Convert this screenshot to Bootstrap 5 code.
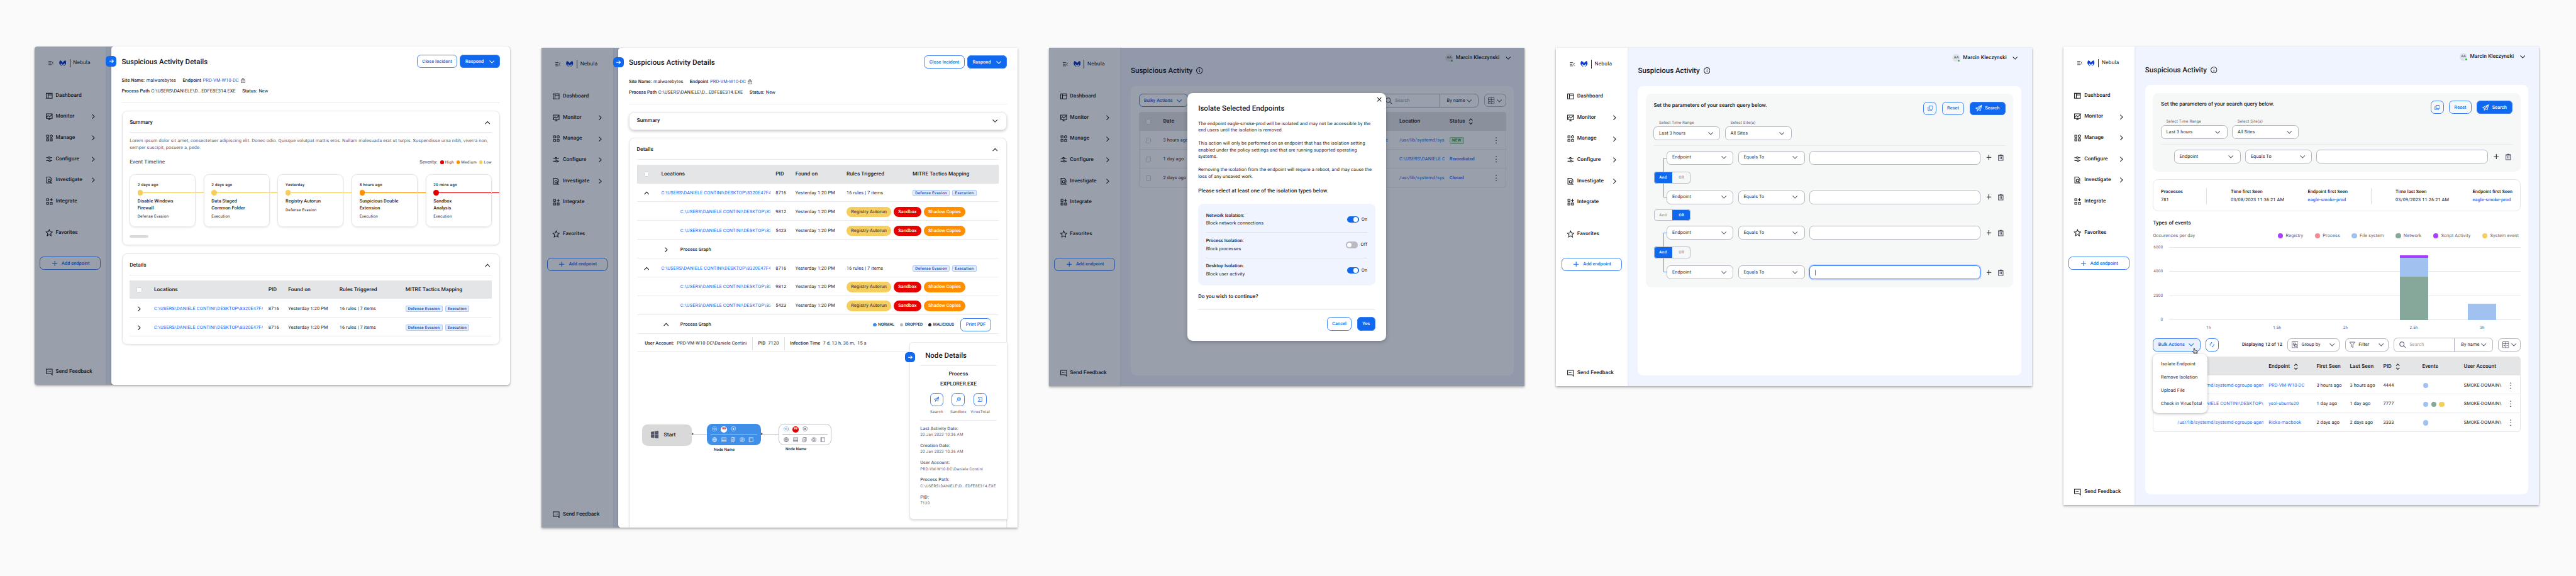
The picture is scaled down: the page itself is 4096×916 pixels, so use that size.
<!doctype html>
<html lang="en">
<head>
<meta charset="utf-8">
<meta name="viewport" content="width=device-width, initial-scale=1">
<title>Nebula – Suspicious Activity</title>
<link rel="stylesheet" href="https://cdn.jsdelivr.net/npm/bootstrap@5.3.0/dist/css/bootstrap.min.css">
<script src="https://cdn.jsdelivr.net/npm/bootstrap@5.3.0/dist/js/bootstrap.bundle.min.js"></script>
<style>
/* 1rem = 10 units of the 1440-unit wide screens */
html{font-size:5.253px}
body{font:400 1.4rem/2rem Roboto,"Liberation Sans",sans-serif;letter-spacing:.025rem;color:#1b1b1f;background:#fafafa;width:4096px;height:916px;overflow:hidden;white-space:nowrap;text-rendering:geometricPrecision}
svg{flex:none;display:block;fill:none;stroke:currentColor;stroke-width:2}
.i16{width:1.6rem;height:1.6rem}.i20{width:2rem;height:2rem}.i24{width:2.4rem;height:2.4rem}
.board{padding-left:54.9px;gap:50px}
.screen{width:144rem;flex:none;background:#f0f4ff;position:relative;overflow:hidden;box-shadow:0 1px 3px rgba(0,0,0,.28),0 3px 4px rgba(0,0,0,.12);margin-top:75.8px}
.h-std{height:102.4rem}
.t22{font-size:2.2rem;line-height:2.8rem;font-weight:500;letter-spacing:0}
.t16{font-size:1.6rem;line-height:2.4rem;font-weight:500;letter-spacing:.015rem}
.t14{font-size:1.4rem;line-height:2rem;font-weight:500;letter-spacing:.01rem}
.t12{font-size:1.2rem;line-height:1.6rem;letter-spacing:.04rem}
.t12m{font-size:1.2rem;line-height:1.6rem;letter-spacing:.05rem;font-weight:500}
.soft{color:#5d5f6e}
.link{color:#1a6bef}
.ol{outline:1px solid #e6e6ea;outline-offset:-1px}
.rule{height:1px;margin-bottom:-1px;background:#e9e9ee;flex:none}
.r16{border-radius:1.6rem}
/* sidebar */
.side{width:21.6rem;background:#fff;box-shadow:0 0 3px rgba(30,50,110,.12);z-index:1;flex:none}
.brandrow{height:10rem;padding-left:4.2rem;margin-bottom:1.6rem}
.brandrow .bar{width:1px;height:2.5rem;background:#333;margin:0 .9rem 0 1rem}
.brandrow .word{font-size:1.6rem;letter-spacing:.04rem}
.item{height:6.4rem;padding:0 3.1rem 0 3.2rem;gap:.8rem}
.btnx{height:4rem;border-radius:1.2rem;outline:1px solid #3f83f2;outline-offset:-1px;color:#1068ee;font-weight:500;letter-spacing:.01rem;padding:0 1.6rem;background:transparent;display:flex;align-items:center;justify-content:center}
.fillx{background:#1068ee;color:#fff}
.addx{margin:4rem 1.6rem 0;gap:1.3rem;padding-left:2rem}
/* drawer */
.veil::after{content:"";position:absolute;inset:0;background:rgba(2,17,45,.4);z-index:2}
.drawer{background:#fff;border-radius:.8rem 0 0 .8rem;z-index:3;padding:2.4rem 3.2rem 0;margin-left:1.6rem;box-shadow:0 0 4px rgba(0,0,0,.15);outline:1px solid rgba(0,0,0,.06)}
.knob{position:absolute;width:3.2rem;height:3.2rem;border-radius:1rem;background:#1068ee;color:#fff;left:-1.6rem;top:2.8rem;display:flex;align-items:center;justify-content:center}
.box{background:#fff;border-radius:1.6rem;outline:1px solid #e6e6ea;outline-offset:-1px;box-shadow:0 1px 3px rgba(0,0,0,.1);padding:0 2.4rem}
.boxhead{height:6.4rem;padding:.8rem .4rem 0 0}
.step{width:20rem;height:16rem;padding:2.4rem}
.trk{margin:.8rem -4.8rem .9rem 0;height:1.6rem}
.trk i{width:1.6rem;height:1.6rem;border-radius:50%;background:currentColor}
.trk b{height:.2rem;min-height:1px;background:currentColor;flex:1}
.dot{border-radius:50%;display:inline-block;background:currentColor;width:1rem;height:1rem}
/* tables */
.trow{display:grid;align-items:center;height:5.7rem;padding-top:.2rem;box-shadow:inset 0 -1px #e9e9ee}
.thd{background:#e4e5e7;font-size:1.6rem;font-weight:500;letter-spacing:.015rem;box-shadow:none}
.g-det{grid-template-columns:5.8rem 1.6rem 33rem 1.6rem 6rem 15.5rem 20rem 1fr}
.g-det>*{grid-row:1}
.g-det>:nth-child(1){grid-column:1;justify-self:center}.g-det>:nth-child(2){grid-column:3}.g-det>:nth-child(3){grid-column:5}.g-det>:nth-child(4){grid-column:6}.g-det>:nth-child(5){grid-column:7}.g-det>:nth-child(6){grid-column:8}
.clip{overflow:hidden}
.kid{padding-left:5.8rem}
.cbx{width:1.6rem;height:1.6rem;border-radius:.3rem;background:#fff;outline:1px solid #d0d1d6;outline-offset:-1px;display:block}
.tagx{height:2rem;line-height:2rem;border-radius:.4rem;padding:0 .8rem;background:#dfebff;outline:1px solid #abc9fb;outline-offset:-1px;color:#174a9c;font-weight:500;font-size:1.2rem;letter-spacing:.05rem}
.pillx{height:3.2rem;line-height:3.2rem;border-radius:1.6rem;padding:0 1.35rem;font-weight:500;background:currentColor;letter-spacing:.02rem}
.pillx span{color:#fff}.pillx.lo span{color:#4d4b4b}
.lo{color:#f4ce5e}.me{color:#ff8f00}.hi{color:#e60000}
.vr1{width:1px;background:#e0e0e6}
/* process graph */
.nodecard{position:absolute;left:85.1rem;right:0;top:62rem;height:53.4rem;background:#fff;border-radius:.8rem 0 0 .8rem;outline:1px solid #e9e9ee;box-shadow:0 2px 4px rgba(0,0,0,.2);padding:0 3.1rem}
.act{width:6.6rem}
.act .btnx{width:4rem;padding:0}
.startx{width:15rem;height:6.4rem;background:#d9d9d9;gap:1.6rem;margin-left:4rem;padding-left:2.6rem}
.wire{height:1px;background:#bdbdc4;margin-top:3.1rem;position:relative}
.wire::before{content:"";position:absolute;left:0;top:-.45rem;border:.5rem solid transparent;border-left:.7rem solid #4b4d5e;border-right:0}
.node{height:6.4rem;padding:.8rem 1.6rem}
.node .hl{height:1px;background:currentColor;opacity:.6;margin:.7rem -.4rem .6rem}
.score{width:1.8rem;height:1.8rem;border-radius:50%;background:#e60000;color:#fff;font-size:1rem;font-weight:700;letter-spacing:0;line-height:1.8rem;text-align:center}
/* main page */
.page{padding:0 3.2rem 3.2rem}
.user{padding:1.9rem 1rem 0 0;height:4.3rem}
.ava{width:2.4rem;height:2.4rem;border-radius:50%;background:#e1e3e8;font-size:1.1rem;line-height:2.4rem;text-align:center;color:#5d5f6e;position:relative;letter-spacing:0;margin-right:.8rem;font-weight:500}
.ava::after{content:"";position:absolute;width:.6rem;height:.6rem;border-radius:50%;background:#2fc132;right:.1rem;bottom:.1rem}
.content{background:#fff;border-radius:1.6rem;padding:2.4rem}
.query{background:#f6f8f8;border-radius:1.6rem;padding:2.4rem}
.fld{height:4.2rem;width:20.2rem;border-radius:1.2rem;background:#fff;outline:1px solid #b3b4be;outline-offset:-1px;padding:0 2.1rem 0 1.7rem;display:flex;align-items:center;justify-content:space-between;color:#2a2a30}
.fld svg,.tool svg{color:#55576a}
.wide{width:51.8rem}
.crit{margin-left:3.9rem;gap:1.4rem}
.focusx{outline:1px solid #2f79f2;box-shadow:0 0 0 1.5px #bcd2fb}
.focusx i{width:1px;height:1.8rem;background:#777}
.pair{position:relative}
.pair::before{content:"";position:absolute;left:2.9rem;top:2.1rem;bottom:2.1rem;width:1rem;border:1px solid #5b95f5;border-right:0}
.ao{width:11.2rem;height:3.6rem;border-radius:.8rem;outline:1px solid #b9bac3;outline-offset:-1px;position:relative;overflow:hidden;font-size:1.2rem;font-weight:500;letter-spacing:.05rem;color:#9b9ca8;text-align:center;line-height:3.6rem}
.ao>*{width:50%}.ao .on{background:#1068ee;color:#fff}
.tool{height:4rem;border-radius:1.2rem;outline:1px solid #b3b4be;outline-offset:-1px;display:flex;align-items:center}
.g-p3{grid-template-columns:5.8rem 1.6rem 67rem 4.5rem 13.8rem 1.4rem 13rem 1fr}
/* modal */
.dialogx{position:absolute;z-index:4;left:42rem;top:13.7rem;width:60rem;height:75rem;background:#fff;border-radius:1.6rem;padding:3.2rem;box-shadow:0 2px 6px rgba(0,0,0,.25)}
.iso{background:#f0f4ff;border-radius:1.6rem;padding:.9rem 2.4rem .7rem}
.isoi{height:7.7rem}
.sw{width:3.6rem;height:2rem;border-radius:1rem;background:#1068ee;padding:.3rem;display:flex;justify-content:flex-end}
.sw::before{content:"";width:1.4rem;height:1.4rem;border-radius:50%;background:#fff}
.sw.off{background:#b9bac2;justify-content:flex-start}
/* results */
.plot{height:22rem;position:relative}
.plot .ln{height:0;gap:1.9rem}
.plot .ln span{width:3rem;text-align:right}
.plot .ln b{flex:1;height:1px;background:#e6e6ea}
.bars{position:absolute;left:6.5rem;width:103.5rem;top:0;bottom:0;display:grid;grid-template-columns:repeat(5,1fr);justify-items:center;align-items:end}
.bars>div{width:8.6rem;height:100%;display:flex;flex-direction:column;justify-content:flex-end}
.xax{display:grid;grid-template-columns:repeat(5,20.7rem);margin:1.6rem 0 0 6.5rem;text-align:center}
.ev{width:1.6rem;height:1.6rem}
.g-p5{grid-template-columns:7.4rem 26rem 1.6rem 14.5rem 10.1rem 10.1rem 11.8rem 12.6rem 12.8rem 1fr}
.menux{position:absolute;z-index:3;left:0;top:4.8rem;width:16.5rem;padding:.9rem 2.4rem;background:#fff;border-radius:1.6rem;box-shadow:0 1px 4px rgba(0,0,0,.3)}
.menux div{height:4rem;line-height:4rem}
.hand{position:absolute;z-index:4;left:11.7rem;top:2.8rem;width:2rem;height:2rem}
</style>
</head>
<body>
<svg width="0" height="0" class="position-absolute">
<symbol id="dn" viewBox="0 0 16 16"><path d="M1 4.5l7 7 7-7"/></symbol>
<symbol id="up" viewBox="0 0 16 16"><path d="M1 11.5l7-7 7 7"/></symbol>
<symbol id="rt" viewBox="0 0 16 16"><path d="M4.5 1l7 7-7 7"/></symbol>
<symbol id="arr" viewBox="0 0 16 16"><path d="M2 8h12M9 3l5 5-5 5"/></symbol>
<symbol id="plus" viewBox="0 0 16 16"><path d="M8 0v16M0 8h16"/></symbol>
<symbol id="ham" viewBox="0 0 16 16"><path stroke-width="1.5" d="M0 3h10M0 8h8M0 13h10M16 3l-5 5 5 5"/></symbol>
<symbol id="logo" viewBox="0 0 22 18"><path stroke="none" fill="#0f3fd0" d="M3 0c-4 5-4 11 2.500 15.500-1-3-.8-5 .2-6.500L11 14l5.300-5c1 1.500 1.200 3.500.2 6.500C23 11 23 5 19 0c-3 .6-6.300 3.400-8 7C9.300 3.400 6 .6 3 0zM5.500 15.500c1.500 1.500 3 2.200 4.500 2.300-2-1.300-3-3-3-5zM16.500 15.500c-1.500 1.500-3 2.200-4.500 2.300 2-1.300 3-3 3-5z"/></symbol>
<symbol id="dash" viewBox="0 0 24 24"><path d="M3 4.500h18v15H3zM8.500 4.500v15M8.500 9.500H21"/></symbol>
<symbol id="mon" viewBox="0 0 24 24"><path d="M3 4h18v13.500H3zM12 17v4M8 21h8M3 15l6-6 4 4 8-8"/></symbol>
<symbol id="man" viewBox="0 0 24 24"><path d="M4 4h6v6H4zM4 15h6v6H4zM15 15h6v6h-6zM18 3l3.300 1.900v4L18 10.800l-3.300-1.900v-4z"/></symbol>
<symbol id="cfg" viewBox="0 0 24 24"><path d="M3 7h6M14 7h7M3 16h8M16 16h5"/><circle cx="11.500" cy="7" r="2.500"/><circle cx="13.500" cy="16" r="2.500"/></symbol>
<symbol id="inv" viewBox="0 0 24 24"><path d="M19 16V8l-5-5H4v18h14M14.500 16.500L20 22"/><circle cx="12" cy="13.500" r="3.800"/></symbol>
<symbol id="int" viewBox="0 0 24 24"><path d="M4 4h6v6H4zM4 15h6v6H4zM15 15h6v6h-6zM18 2.500v9M13.500 7h9"/></symbol>
<symbol id="star" viewBox="0 0 24 24"><path d="M12 2.500l2.800 6.300 6.700.7-5 4.600 1.400 6.700L12 17.300l-5.900 3.500 1.400-6.700-5-4.600 6.700-.7z"/></symbol>
<symbol id="fb" viewBox="0 0 24 24"><path d="M3 4h18v17l-4-4H3zM7 10.500h2M11 10.500h2M15 10.500h2"/></symbol>
<symbol id="lock" viewBox="0 0 16 18"><path stroke-width="1.500" d="M1 7h14v10H1zM4.500 7V4.500a3.500 3.500 0 017 0V7M8 10v4"/></symbol>
<symbol id="info" viewBox="0 0 20 20"><circle cx="10" cy="10" r="9"/><path d="M10 9v6M10 5v2"/></symbol>
<symbol id="plane" viewBox="0 0 20 20"><path stroke-width="1.700" d="M19 1L1 9.500l5 2.500L19 1l-4 16-5.500-3.300L19 1M6 12v6l3.500-4.300"/></symbol>
<symbol id="copy" viewBox="0 0 16 16"><path stroke-width="1.600" d="M5 1h10v10H5zM3 4.500H1.500V15H12v-2"/></symbol>
<symbol id="trash" viewBox="0 0 24 24"><path d="M5 7h14v14H5zM4 6h16M9 4.500h6M10 10v7M14 10v7"/></symbol>
<symbol id="find" viewBox="0 0 20 20"><circle cx="8" cy="8" r="6.500"/><path d="M13 13l6 6"/></symbol>
<symbol id="cols" viewBox="0 0 20 20"><path stroke-width="1.600" d="M1 1h18v18H1zM1 6.500h18M10 1v18M3.500 12.500h4M5.500 10.500v4M12.500 12.500h4"/></symbol>
<symbol id="grp" viewBox="0 0 20 20"><path stroke-width="1.600" d="M1 1h18v18H1zM4.500 4.500h7v7h-7zM8.500 8.500h7v7h-7z"/></symbol>
<symbol id="fun" viewBox="0 0 20 20"><path stroke-width="1.700" d="M2 2h16l-6 8v8l-4-2v-6z"/></symbol>
<symbol id="sort" viewBox="0 0 14 20"><path d="M2 7l5-5 5 5M2 13l5 5 5-5"/></symbol>
<symbol id="keb" viewBox="0 0 4 20"><g stroke="none" fill="#44464f"><circle cx="2" cy="2" r="1.600"/><circle cx="2" cy="10" r="1.600"/><circle cx="2" cy="18" r="1.600"/></g></symbol>
<symbol id="sync" viewBox="0 0 16 16"><path stroke-width="1.600" d="M2.500 10.500a6 6 0 013-7.500L7.500 2M5.500 0l2.500 2-2 3M13.500 5.500a6 6 0 01-3 7.500l-2 1M10.500 16L8 14l2-3"/></symbol>
<symbol id="xx" viewBox="0 0 16 16"><path d="M2 2l12 12M14 2L2 14"/></symbol>
<symbol id="bugf" viewBox="0 0 16 16"><circle cx="9.500" cy="6.500" r="5" stroke-width="1.500"/><path stroke-width="1.500" d="M6 10l-4.500 5M9.500 4v5M7.500 6.500h4"/></symbol>
<symbol id="sig" viewBox="0 0 16 16"><path stroke-width="1.600" d="M14 2H2l6 6-6 6h12z"/></symbol>
<symbol id="win" viewBox="0 0 24 24"><path stroke="none" fill="#55576a" d="M0 3.500l10-1.400V11.500H0zM11.200 2l12.800-2v11.500H11.200zM0 12.600h10v9.500L0 20.600zM11.200 12.600H24V24l-12.800-1.800z"/></symbol>
<symbol id="ring" viewBox="0 0 16 16"><circle cx="8" cy="8" r="7" stroke-width="1.400" stroke-dasharray="8 2 2 2 3 2"/><circle cx="8" cy="8" r="2.500" stroke-width="1.400"/></symbol>
<symbol id="shield" viewBox="0 0 16 16"><path stroke-width="1.300" d="M8 .8l6 2v5c0 4-3 6.500-6 7.500-3-1-6-3.500-6-7.500v-5z"/><ellipse cx="8" cy="8" rx="2.200" ry="3" fill="currentColor" stroke="none"/></symbol>
<symbol id="globe" viewBox="0 0 16 16"><circle cx="8" cy="8" r="6.800" stroke-width="1.300"/><ellipse cx="8" cy="8" rx="3" ry="6.800" stroke-width="1.300"/><path stroke-width="1.300" d="M1 8h14M8 1v14"/></symbol>
<symbol id="srv" viewBox="0 0 16 16"><path stroke-width="1.300" d="M1.500 1.500h13v13h-13zM1.500 6h13M1.500 10.500h13"/></symbol>
<symbol id="docs" viewBox="0 0 16 16"><path stroke-width="1.300" d="M3 3h8v12H3zM5 3V1h8.500v11H11M5 7h4M5 9.500h4M5 12h4"/></symbol>
<symbol id="targ" viewBox="0 0 16 16"><circle cx="8" cy="8" r="6.800" stroke-width="1.300"/><circle cx="8" cy="8" r="3.500" stroke-width="1.300"/><path stroke-width="1.300" d="M8 5v3l2 2"/></symbol>
<symbol id="book" viewBox="0 0 16 16"><path stroke-width="1.300" d="M2 1.500h12v13H2zM4.500 1.500v13M8 4h1M11 4h1"/></symbol>
</svg>

<template id="side">
  <div class="brandrow d-flex align-items-center"><svg class="i16"><use href="#ham"/></svg><svg style="width:2.2rem;height:1.8rem;margin-left:1.6rem"><use href="#logo"/></svg><span class="bar"></span><span class="word">Nebula</span></div>
  <div class="t16">
    <div class="item d-flex align-items-center"><svg class="i24"><use href="#dash"/></svg>Dashboard</div>
    <div class="item d-flex align-items-center"><svg class="i24"><use href="#mon"/></svg>Monitor<svg class="i16 ms-auto"><use href="#rt"/></svg></div>
    <div class="item d-flex align-items-center"><svg class="i24"><use href="#man"/></svg>Manage<svg class="i16 ms-auto"><use href="#rt"/></svg></div>
    <div class="item d-flex align-items-center"><svg class="i24"><use href="#cfg"/></svg>Configure<svg class="i16 ms-auto"><use href="#rt"/></svg></div>
    <div class="item d-flex align-items-center"><svg class="i24"><use href="#inv"/></svg>Investigate<svg class="i16 ms-auto"><use href="#rt"/></svg></div>
    <div class="item d-flex align-items-center"><svg class="i24"><use href="#int"/></svg>Integrate</div>
    <div class="item d-flex align-items-center" style="margin-top:3.2rem"><svg class="i24"><use href="#star"/></svg>Favorites</div>
  </div>
  <div class="btnx addx"><svg class="i16"><use href="#plus"/></svg>Add endpoint</div>
  <div class="item t16 d-flex align-items-center mt-auto" style="margin-bottom:.7rem"><svg class="i24"><use href="#fb"/></svg>Send Feedback</div>
</template>

<template id="user">
  <div class="user d-flex align-items-center justify-content-end"><span class="ava">AA</span><span class="t16">Marcin Kleczynski</span><svg class="i16" style="margin-left:1.8rem"><use href="#dn"/></svg></div>
  <div class="t22 d-flex align-items-center" style="margin:1.3rem 0 3.2rem;gap:1.2rem">Suspicious Activity<svg class="i20"><use href="#info"/></svg></div>
</template>

<template id="qhead">
  <div class="d-flex align-items-start" style="height:4rem"><span class="t16 me-auto">Set the parameters of your search query below.</span>
    <span class="btnx" style="width:4rem;padding:0"><svg class="i16"><use href="#copy"/></svg></span><span class="btnx" style="margin:0 1.6rem">Reset</span><span class="btnx fillx" style="width:10.8rem;gap:.9rem"><svg class="i20"><use href="#plane"/></svg>Search</span></div>
  <div class="d-flex t12 soft" style="margin:1.5rem 0 .3rem 1.6rem"><span style="width:21.6rem">Select Time Range</span><span>Select Site(s)</span></div>
  <div class="d-flex" style="margin:0 0 1.5rem -.1rem;gap:1.4rem"><span class="fld">Last 3 hours<svg class="i16"><use href="#dn"/></svg></span><span class="fld">All Sites<svg class="i16"><use href="#dn"/></svg></span></div>
  <div class="rule" style="margin-bottom:1.5rem"></div>
</template>

<template id="crit">
  <span class="fld">Endpoint<svg class="i16"><use href="#dn"/></svg></span><span class="fld">Equals To<svg class="i16"><use href="#dn"/></svg></span><span class="fld wide"><i></i></span>
  <span class="d-flex" style="gap:1.2rem"><svg class="i24" style="padding:.4rem"><use href="#plus"/></svg><svg class="i24" style="color:#4b4d5e"><use href="#trash"/></svg></span>
</template>

<template id="dhead">
  <span class="knob"><svg class="i16"><use href="#arr"/></svg></span>
  <div class="d-flex align-items-center" style="height:4rem;gap:.8rem"><span class="t22 me-auto" style="padding-top:.2rem">Suspicious Activity Details</span><span class="btnx" style="padding-top:.2rem">Close Incident</span><span class="btnx fillx" style="width:12rem;gap:1.6rem;padding-top:.2rem"><slot></slot><svg class="i16"><use href="#dn"/></svg></span></div>
  <div class="d-flex align-items-center" style="margin-top:2.9rem;height:2rem"><span class="t14">Site Name:</span><span style="margin:0 2rem 0 .5rem">malwarebytes</span><span class="t14">Endpoint</span><span style="margin:0 .6rem 0 .5rem;color:#2457dd">PRD-VM-W10-DC</span><svg style="width:1.3rem;height:1.5rem"><use href="#lock"/></svg></div>
  <div class="d-flex" style="margin:1.3rem 0 2.3rem;height:2rem"><span class="t14">Process Path</span><span style="margin:0 2rem 0 .5rem">C:\USERS\DANIELE\D...EDFE8E314.EXE</span><span class="t14">Status:</span><span style="margin-left:.5rem">New</span></div>
  <div class="rule"></div>
</template>

<template id="thead">
  <div class="trow thd g-det"><span class="cbx"></span><span>Locations</span><span>PID</span><span>Found on</span><span>Rules Triggered</span><span>MITRE Tactics Mapping</span></div>
</template>
<template id="prow">
  <div class="trow g-det"><svg class="i16 chev"><use href="#up"/></svg><span class="clip link">C:\USERS\DANIELE CONTINI\DESKTOP\8320E47F4</span><span>8716</span><span>Yesterday 1:20 PM</span><span>16 rules | 7 items</span><span class="d-flex" style="gap:.8rem"><span class="tagx">Defense Evasion</span><span class="tagx">Execution</span></span></div>
</template>
<template id="krow">
  <div class="trow g-det"><span></span><span class="clip link kid">C:\USERS\DANIELE CONTINI\DESKTOP\83</span><span>9812</span><span>Yesterday 1:20 PM</span><span class="d-flex" style="gap:.8rem"><span class="pillx lo"><span>Registry Autorun</span></span><span class="pillx hi"><span>Sandbox</span></span><span class="pillx me"><span>Shadow Copies</span></span></span><span></span></div>
  <div class="trow g-det"><span></span><span class="clip link kid">C:\USERS\DANIELE CONTINI\DESKTOP\83</span><span>5423</span><span>Yesterday 1:20 PM</span><span class="d-flex" style="gap:.8rem"><span class="pillx lo"><span>Registry Autorun</span></span><span class="pillx hi"><span>Sandbox</span></span><span class="pillx me"><span>Shadow Copies</span></span></span><span></span></div>
</template>
<template id="nodeicons">
  <div class="d-flex" style="gap:1.1rem"><svg class="i16 rg"><use href="#ring"/></svg><span class="score">99</span><svg class="i16"><use href="#shield"/></svg></div>
  <div class="hl"></div>
  <div class="d-flex" style="gap:1.15rem"><svg class="i16"><use href="#globe"/></svg><svg class="i16"><use href="#srv"/></svg><svg class="i16"><use href="#docs"/></svg><svg class="i16"><use href="#targ"/></svg><svg class="i16"><use href="#book"/></svg></div>
</template>

<div class="board d-flex align-items-start">

<!-- incident summary -->
<section class="screen h-std d-flex veil" style="margin-top:74.3px;border-radius:.8rem">
  <aside class="side d-flex flex-column" data-t="side"></aside>
  <main class="drawer flex-grow-1 position-relative">
    <div data-t="dhead" data-slot="Respond"></div>
    <div class="box" style="margin-top:2.5rem;height:40.8rem">
      <div class="boxhead d-flex align-items-center justify-content-between"><span class="t16">Summary</span><svg class="i16"><use href="#up"/></svg></div>
      <div class="rule"></div>
      <p class="soft m-0" style="padding-top:1.8rem">Lorem ipsum dolor sit amet, consectetuer adipiscing elit. Donec odio. Quisque volutpat mattis eros. Nullam malesuada erat ut turpis. Suspendisse urna nibh, viverra non,<br>semper suscipit, posuere a, pede.</p>
      <div class="d-flex align-items-center soft" style="margin:2.2rem 0 2.4rem;height:2.4rem"><span class="t16 me-auto">Event Timeline</span><span style="margin-right:.9rem;font-weight:500;letter-spacing:0">Severity:</span><span class="t12m d-flex align-items-center" style="gap:.4rem"><i class="dot hi"></i>High<i class="dot me" style="margin-left:.4rem"></i>Medium<i class="dot lo" style="margin-left:.4rem"></i>Low</span></div>
      <div class="d-flex" style="gap:2.4rem">
        <div class="box step flex-shrink-0"><div class="t12m">2 days ago</div><div class="trk d-flex align-items-center lo"><i></i><b></b></div><div class="t14">Disable Windows<br>Firewall</div><div class="t12" style="margin-top:.8rem">Defense Evasion</div></div>
        <div class="box step flex-shrink-0"><div class="t12m">2 days ago</div><div class="trk d-flex align-items-center lo"><i></i><b></b></div><div class="t14">Data Staged<br>Common Folder</div><div class="t12" style="margin-top:.8rem">Execution</div></div>
        <div class="box step flex-shrink-0"><div class="t12m">Yesterday</div><div class="trk d-flex align-items-center lo"><i></i><b></b></div><div class="t14">Registry Autorun</div><div class="t12" style="margin-top:.8rem">Defense Evasion</div></div>
        <div class="box step flex-shrink-0"><div class="t12m">8 hours ago</div><div class="trk d-flex align-items-center me"><i></i><b></b></div><div class="t14">Suspicious Double<br>Extension</div><div class="t12" style="margin-top:.8rem">Execution</div></div>
        <div class="box step flex-shrink-0"><div class="t12m">20 mins ago</div><div class="trk d-flex align-items-center hi"><i></i><b></b></div><div class="t14">Sandbox<br>Analysis</div><div class="t12" style="margin-top:.8rem">Execution</div></div>
      </div>
      <div style="margin-top:2.4rem;width:5.6rem;height:.8rem;border-radius:.4rem;background:#d9dade"></div>
    </div>
    <div class="box" style="margin-top:2.4rem;padding-bottom:2.4rem">
      <div class="boxhead d-flex align-items-center justify-content-between"><span class="t16">Details</span><svg class="i16"><use href="#up"/></svg></div>
      <div class="rule" style="margin-bottom:1.5rem"></div>
      <div data-t="thead"></div>
      <div data-t="prow" data-chev="rt"></div>
      <div data-t="prow" data-chev="rt"></div>
    </div>
  </main>
</section>

<!-- incident details with the process graph -->
<section class="screen d-flex veil" style="height:145.2rem">
  <aside class="side d-flex flex-column" data-t="side"></aside>
  <main class="drawer flex-grow-1 position-relative">
    <div data-t="dhead" data-slot="Raspond"></div>
    <div class="box d-flex align-items-center justify-content-between" style="margin-top:2.5rem;height:5.5rem;padding-right:2.8rem;box-shadow:0 2px 4px rgba(0,0,0,.2)"><span class="t16">Summary</span><svg class="i16"><use href="#dn"/></svg></div>
    <div class="box position-relative" style="margin-top:2.4rem;height:122rem">
      <div class="boxhead d-flex align-items-center justify-content-between"><span class="t16">Details</span><svg class="i16"><use href="#up"/></svg></div>
      <div class="rule" style="margin-bottom:1.5rem"></div>
      <div data-t="thead"></div>
      <div data-t="prow"></div>
      <div data-t="krow"></div>
      <div class="trow g-det"><span></span><span class="d-flex align-items-center t14"><svg class="i16" style="margin:0 3.6rem 0 .6rem"><use href="#rt"/></svg>Process Graph</span></div>
      <div data-t="prow"></div>
      <div data-t="krow"></div>
      <div class="trow d-flex align-items-center" style="padding:.1rem 2.4rem 0 8rem"><svg class="i16" style="margin-right:3.6rem"><use href="#up"/></svg><span class="t14 me-auto">Process Graph</span>
        <span class="t12m d-flex align-items-center" style="gap:.5rem;letter-spacing:0"><i class="dot" style="color:#3f8ee8"></i>NORMAL<i class="dot" style="color:#b9bac2;margin-left:1.2rem"></i>DROPPED<i class="dot" style="color:#22242c;margin-left:1.2rem"></i>MALICIOUS</span><span class="btnx" style="margin-left:2rem">Print PDF</span></div>
      <div class="trow d-flex align-items-center" style="padding-left:2.4rem;height:5.5rem"><span class="t14">User Account:</span><span style="margin:0 1.6rem 0 .8rem">PRD-VM-W10-DC\Daniele Contini</span><span class="vr1" style="height:4rem"></span><span class="t14" style="margin:0 .8rem 0 1.6rem">PID</span>7120<span class="vr1" style="height:4rem;margin:0 1.6rem"></span><span class="t14" style="margin-right:.8rem">Infection Time</span>7 d, 13 h, 36 m, &nbsp;15 s</div>
      <div class="d-flex align-items-start" style="margin:21.7rem 0 0 -2.4rem">
        <div class="startx r16 d-flex align-items-center" style="margin-top:.2rem"><svg class="i24"><use href="#win"/></svg><span class="t16" style="padding-top:.3rem">Start</span></div>
        <div class="wire" style="width:4.6rem"></div>
        <div><div class="node r16" style="background:#3f8ee8;color:#e8f1fd;width:16.4rem" data-t="nodeicons" data-inv="1"></div><div class="t12m" style="letter-spacing:0;margin:.6rem 0 0 2.1rem">Node Name</div></div>
        <div class="wire" style="width:5.3rem"></div>
        <div><div class="node r16" style="outline:1px solid #bdbdc4;outline-offset:-1px;color:#6b6d7a;width:16rem" data-t="nodeicons"></div><div class="t12m" style="letter-spacing:0;margin:.5rem 0 0 2.1rem">Node Name</div></div>
      </div>
      <div class="nodecard">
        <span class="knob"><svg class="i16"><use href="#arr"/></svg></span>
        <div class="t22 d-flex align-items-center" style="padding:1.1rem 0 0 1.5rem;height:6.8rem">Node Details</div>
        <div class="rule"></div>
        <div class="t16 text-center" style="padding-top:1.7rem">Process</div>
        <div class="t16 text-center" style="margin:.5rem 0 1.5rem;letter-spacing:0">EXPLORER.EXE</div>
        <div class="d-flex justify-content-center t12 soft" style="margin-bottom:1.6rem">
          <div class="act d-flex flex-column align-items-center"><span class="btnx"><svg class="i16"><use href="#plane"/></svg></span><span style="margin-top:.9rem">Search</span></div>
          <div class="act d-flex flex-column align-items-center"><span class="btnx"><svg class="i16"><use href="#bugf"/></svg></span><span style="margin-top:.9rem">Sandbox</span></div>
          <div class="act d-flex flex-column align-items-center"><span class="btnx"><svg class="i16"><use href="#sig"/></svg></span><span style="margin-top:.9rem">VirusTotal</span></div>
        </div>
        <div class="rule" style="margin-bottom:1.5rem"></div>
        <dl class="m-0 soft">
          <dt class="t14">Last Activity Date:</dt><dd class="t12m" style="margin-bottom:1.6rem;font-weight:400">20 Jan 2023 10:36 AM</dd>
          <dt class="t14">Creation Date:</dt><dd class="t12m" style="margin-bottom:1.6rem;font-weight:400">20 Jan 2023 10:36 AM</dd>
          <dt class="t14">User Account:</dt><dd class="t12m" style="margin-bottom:1.6rem;font-weight:400">PRD-VM-W10-DC\Daniele Contini</dd>
          <dt class="t14">Process Path:</dt><dd class="t12m" style="margin-bottom:1.6rem;font-weight:400">C:\USERS\DANIELE\D...EDFE8E314.EXE</dd>
          <dt class="t14">PID:</dt><dd class="t12m m-0" style="font-weight:400">7120</dd>
        </dl>
      </div>
    </div>
  </main>
</section>

<!-- endpoint isolation dialog -->
<section class="screen h-std d-flex veil">
  <aside class="side d-flex flex-column" data-t="side"></aside>
  <main class="page flex-grow-1 d-flex flex-column">
    <div data-t="user"></div>
    <div class="content flex-grow-1">
      <div class="d-flex align-items-center" style="height:4rem;margin-bottom:1.5rem;gap:1.6rem">
        <span class="btnx me-auto" style="width:15rem;justify-content:flex-start;gap:1.2rem">Bulky Actions<svg class="i16"><use href="#dn"/></svg></span>
        <span class="tool" style="width:30rem;height:4.2rem"><svg class="i20" style="margin:0 1rem 0 1.7rem"><use href="#find"/></svg><span style="color:#9b9ca8">Search</span><span class="vr1 ms-auto h-100" style="background:#b3b4be"></span><span style="margin:0 .5rem 0 2rem">By name</span><svg class="i16" style="margin-right:2rem"><use href="#dn"/></svg></span>
        <span class="tool justify-content-center" style="width:6.7rem;gap:.6rem"><svg class="i20"><use href="#cols"/></svg><svg class="i16"><use href="#dn"/></svg></span>
      </div>
      <div class="ol" style="border-radius:.8rem;overflow:hidden">
        <div class="trow thd g-p3"><span class="cbx mx-auto"></span><span></span><span>Date</span><span></span><span>Location</span><span></span><span class="d-flex align-items-center" style="gap:1rem">Status<svg style="width:1.4rem;height:2rem"><use href="#sort"/></svg></span><span></span></div>
        <div class="trow g-p3"><span class="cbx mx-auto"></span><span></span><span>3 hours ago</span><span class="link">&nbsp;c</span><span class="clip link">/usr/lib/systemd/sys</span><span></span><span><span class="tagx d-inline-block" style="background:#dcf5dc;outline-color:#8bcf93;color:#23803a">NEW</span></span><svg style="width:.4rem;height:2rem;margin-left:.9rem"><use href="#keb"/></svg></div>
        <div class="trow g-p3"><span class="cbx mx-auto"></span><span></span><span>1 day ago</span><span></span><span class="clip link">C:\USERS\DANIELE C</span><span></span><span class="link t14">Remediated</span><svg style="width:.4rem;height:2rem;margin-left:.9rem"><use href="#keb"/></svg></div>
        <div class="trow g-p3"><span class="cbx mx-auto"></span><span></span><span>2 days ago</span><span></span><span class="clip link">/usr/lib/systemd/sys</span><span></span><span class="link t14">Closed</span><svg style="width:.4rem;height:2rem;margin-left:.9rem"><use href="#keb"/></svg></div>
      </div>
    </div>
  </main>
  <div class="dialogx">
    <svg class="i16 position-absolute" style="right:1.2rem;top:1.2rem"><use href="#xx"/></svg>
    <div class="t22">Isolate Selected Endpoints</div>
    <p style="margin:2.4rem 0 2rem">The endpoint eagle-smoke-prod will be isolated and may not be accessible by the<br>end users until the isolation is removed.</p>
    <p style="margin-bottom:2rem">This action will only be performed on an endpoint that has the isolation setting<br>enabled under the policy settings and that are running supported operating<br>systems.</p>
    <p style="margin-bottom:2.3rem">Removing the isolation from the endpoint will require a reboot, and may cause the<br>loss of any unsaved work.</p>
    <div class="t16" style="margin-bottom:2.5rem">Please select at least one of the isolation types below.</div>
    <div class="iso">
      <div class="isoi d-flex align-items-center justify-content-between"><div><div class="t14" style="margin-bottom:.4rem">Network Isolation:</div>Block network connections</div><div class="d-flex align-items-center" style="gap:.8rem"><span class="sw"></span>On</div></div>
      <div class="rule" style="background:#dde1ec"></div>
      <div class="isoi d-flex align-items-center justify-content-between"><div><div class="t14" style="margin-bottom:.4rem">Process Isolation:</div>Block processes</div><div class="d-flex align-items-center" style="gap:.8rem"><span class="sw off"></span>Off</div></div>
      <div class="rule" style="background:#dde1ec"></div>
      <div class="isoi d-flex align-items-center justify-content-between"><div><div class="t14" style="margin-bottom:.4rem">Desktop Isolation:</div>Block user activity</div><div class="d-flex align-items-center" style="gap:.8rem"><span class="sw"></span>On</div></div>
    </div>
    <div class="t16" style="margin:2.3rem 0 2.5rem">Do you wish to continue?</div>
    <div class="rule"></div>
    <div class="d-flex justify-content-end" style="gap:1.6rem;margin-top:2.3rem"><span class="btnx" style="height:4.2rem">Cancel</span><span class="btnx fillx" style="height:4.2rem">Yes</span></div>
  </div>
</section>

<!-- query builder -->
<section class="screen h-std d-flex">
  <aside class="side d-flex flex-column" data-t="side"></aside>
  <main class="page flex-grow-1 d-flex flex-column">
    <div data-t="user"></div>
    <div class="content flex-grow-1">
      <div class="query">
        <div data-t="qhead"></div>
        <div class="pair">
          <div class="crit d-flex align-items-center" data-t="crit"></div>
          <div class="ao d-flex" style="margin:2.1rem 0"><span class="on">And</span><span>OR</span></div>
          <div class="crit d-flex align-items-center" data-t="crit"></div>
        </div>
        <div class="ao d-flex" style="margin:1.5rem 0"><span>And</span><span class="on">OR</span></div>
        <div class="pair">
          <div class="crit d-flex align-items-center" data-t="crit"></div>
          <div class="ao d-flex" style="margin:2.1rem 0"><span class="on">And</span><span>OR</span></div>
          <div class="crit d-flex align-items-center" data-t="crit" data-focus="1"></div>
        </div>
      </div>
    </div>
  </main>
</section>

<!-- search results -->
<section class="screen d-flex" style="height:138.7rem;margin-top:74.4px">
  <aside class="side d-flex flex-column" data-t="side"></aside>
  <main class="page flex-grow-1 d-flex flex-column">
    <div data-t="user"></div>
    <div class="content flex-grow-1">
      <div class="query">
        <div data-t="qhead"></div>
        <div class="crit d-flex align-items-center" data-t="crit"></div>
      </div>
      <div class="ol r16 d-flex align-items-center justify-content-between" style="height:9.8rem;margin-top:2.3rem;padding:.4rem 2.4rem 0">
        <div><div class="t14" style="margin-bottom:.4rem">Processes</div>781</div><span class="vr1" style="height:4.9rem"></span>
        <div><div class="t14" style="margin-bottom:.4rem">Time first Seen</div>03/08/2023 11:36:21 AM</div><div><div class="t14" style="margin-bottom:.4rem">Endpoint first Seen</div><span class="link t14">eagle-smoke-prod</span></div><span class="vr1" style="height:4.9rem"></span>
        <div><div class="t14" style="margin-bottom:.4rem">Time last Seen</div>03/09/2023 11:26:21 AM</div><div><div class="t14" style="margin-bottom:.4rem">Endpoint first Seen</div><span class="link t14">eagle-smoke-prod</span></div>
      </div>
      <div class="t16" style="margin:2.4rem 0 1.6rem">Types of events</div>
      <div class="d-flex align-items-center soft" style="gap:3.55rem"><span class="me-auto">Occurences per day</span>
        <span class="d-flex align-items-center" style="gap:.8rem"><i class="dot ev" style="color:#a83dff"></i>Registry</span><span class="d-flex align-items-center" style="gap:.8rem"><i class="dot ev" style="color:#f28a93"></i>Process</span><span class="d-flex align-items-center" style="gap:.8rem"><i class="dot ev" style="color:#a1c2f0"></i>File system</span><span class="d-flex align-items-center" style="gap:.8rem"><i class="dot ev" style="color:#85a89b"></i>Network</span><span class="d-flex align-items-center" style="gap:.8rem"><i class="dot ev" style="color:#a83dff"></i>Script Activity</span><span class="d-flex align-items-center" style="gap:.8rem;margin-right:.5rem"><i class="dot ev lo"></i><span class="soft">System event</span></span></div>
      <div class="plot d-flex flex-column justify-content-between t12 soft" style="margin-top:2.4rem">
        <div class="ln d-flex align-items-center"><span>6000</span><b></b></div><div class="ln d-flex align-items-center"><span>4000</span><b></b></div><div class="ln d-flex align-items-center"><span>2000</span><b></b></div><div class="ln d-flex align-items-center"><span>0</span><b></b></div>
        <div class="bars"><div></div><div></div><div></div><div><i style="height:3.8%;background:#a83dff"></i><i style="height:25.5%;background:#a1c2f0"></i><i style="height:59.7%;background:#85a89b"></i></div><div><i style="height:22.4%;background:#a1c2f0"></i></div></div>
      </div>
      <div class="xax t12 soft"><span>1h</span><span>1.5h</span><span>2h</span><span>2.5h</span><span>3h</span></div>
      <div class="d-flex align-items-center position-relative" style="height:4rem;margin:2.4rem 0 1.6rem;gap:1.6rem">
        <span class="btnx" style="width:14.3rem;background:#e9f1ff;justify-content:flex-start;gap:1.1rem">Bulk Actions<svg class="i16"><use href="#dn"/></svg></span><span class="btnx" style="width:4rem;padding:0"><svg class="i16"><use href="#sync"/></svg></span>
        <span class="t14 ms-auto">Displaying 12 of 12</span>
        <span class="tool" style="width:15.8rem;padding:0 1.5rem 0 1.2rem"><svg class="i20" style="margin-right:1rem"><use href="#grp"/></svg>Group by<svg class="i16 ms-auto"><use href="#dn"/></svg></span>
        <span class="tool" style="width:13.2rem;padding:0 1.4rem 0 1.2rem"><svg class="i20" style="margin-right:.9rem"><use href="#fun"/></svg>Filter<svg class="i16 ms-auto"><use href="#dn"/></svg></span>
        <span class="tool" style="width:30rem;height:4.2rem"><svg class="i20" style="margin:0 1rem 0 1.7rem"><use href="#find"/></svg><span style="color:#9b9ca8">Search</span><span class="vr1 ms-auto h-100" style="background:#b3b4be"></span><span style="margin:0 .5rem 0 2rem">By name</span><svg class="i16" style="margin-right:2rem"><use href="#dn"/></svg></span>
        <span class="tool justify-content-center" style="width:6.7rem;gap:.6rem"><svg class="i20"><use href="#cols"/></svg><svg class="i16"><use href="#dn"/></svg></span>
        <div class="menux"><div>Isolate Endpoint</div><div>Remove Isolation</div><div>Upload File</div><div>Check in VirusTotal</div></div>
        <svg class="hand" viewBox="0 0 20 20"><path fill="#fff" stroke="#111" stroke-width="1.5" stroke-linejoin="round" d="M6 11V3a1.5 1.5 0 013 0v5l1-.5 1.5 1 1.5-.5 1.5 1 1.5 0 1 1.5v4l-1.5 4H8l-5-6.500c0-1.500 1.500-2 3-.5zM9 12v3M12 12v3M14.500 12v3"/></svg>
      </div>
      <div class="ol" style="border-radius:1rem;overflow:hidden">
        <div class="trow thd g-p5"><span></span><span></span><span></span><span class="d-flex align-items-center" style="gap:1.2rem">Endpoint<svg style="width:1.4rem;height:2rem"><use href="#sort"/></svg></span><span>First Seen</span><span>Last Seen</span><span class="d-flex align-items-center" style="gap:1.2rem">PID<svg style="width:1.4rem;height:2rem"><use href="#sort"/></svg></span><span>Events</span><span>User Account</span><span></span></div>
        <div class="trow g-p5"><span></span><span class="clip link">/usr/lib/systemd/systemd-cgroups-agen</span><span></span><span class="link">PRD-VM-W10-DC</span><span>3 hours ago</span><span>3 hours ago</span><span>4444</span><span class="d-flex" style="gap:.8rem;padding-left:.3rem"><i class="dot ev" style="color:#a1c2f0"></i></span><span class="clip">SMOKE-DOMAIN\</span><svg style="width:.4rem;height:2rem;margin-left:1.2rem"><use href="#keb"/></svg></div>
        <div class="trow g-p5"><span></span><span class="clip link">C:\USERS\DANIELE CONTINI\DESKTOP\</span><span></span><span class="link">ysol-ubuntu20</span><span>1 day ago</span><span>1 day ago</span><span>7777</span><span class="d-flex" style="gap:.8rem;padding-left:.3rem"><i class="dot ev" style="color:#a1c2f0"></i><i class="dot ev" style="color:#85a89b"></i><i class="dot ev lo"></i></span><span class="clip">SMOKE-DOMAIN\</span><svg style="width:.4rem;height:2rem;margin-left:1.2rem"><use href="#keb"/></svg></div>
        <div class="trow g-p5"><span></span><span class="clip link">/usr/lib/systemd/systemd-cgroups-agen</span><span></span><span class="link">Ricks-macbook</span><span>2 days ago</span><span>2 days ago</span><span>3333</span><span class="d-flex" style="gap:.8rem;padding-left:.3rem"><i class="dot ev" style="color:#a1c2f0"></i></span><span class="clip">SMOKE-DOMAIN\</span><svg style="width:.4rem;height:2rem;margin-left:1.2rem"><use href="#keb"/></svg></div>
      </div>
    </div>
  </main>
</section>
</div>

<script>
// Fill every placeholder from its template, then apply its variations.
document.querySelectorAll('[data-t]').forEach(el => {
  el.append(document.getElementById(el.dataset.t).content.cloneNode(true));
  if (el.dataset.slot) el.querySelector('slot').replaceWith(el.dataset.slot);
  if (el.dataset.chev) el.querySelector('.chev use').setAttribute('href', '#' + el.dataset.chev);
  if (el.dataset.focus) el.querySelector('.wide').classList.add('focusx');
  if (el.dataset.inv) { const s = el.querySelector('.score'); s.style.background = '#fff'; s.style.color = '#e60000'; }
  else if (el.dataset.t === 'nodeicons') el.querySelector('.rg').style.color = '#3f8ee8';
});
</script>
</body>
</html>
